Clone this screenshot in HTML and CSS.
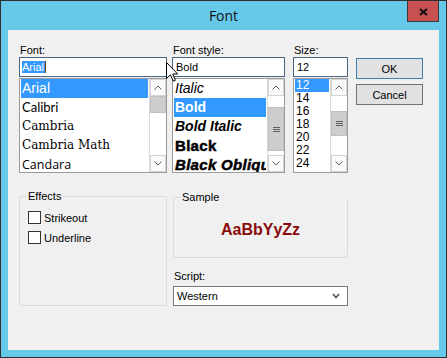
FILE: index.html
```html
<!DOCTYPE html>
<html>
<head>
<meta charset="utf-8">
<title>Font</title>
<link rel="stylesheet" href="styles.css">
</head>
<body>
<div class="window">
  <div class="titlebar">
    <span class="title">Font</span>
    <div class="close"><svg width="9" height="8" viewBox="0 0 9 8"><path d="M1 1 L8 7 M8 1 L1 7" stroke="#111" stroke-width="2.2" fill="none"/></svg></div>
  </div>
  <div class="client">
    <div class="top-row">
      <div class="col col-font">
        <div class="label">Font:</div>
        <div class="input"><span class="sel">Arial</span><span class="caret"></span></div>
        <div class="list">
          <ul class="items">
            <li class="item selected f-arial">Arial</li>
            <li class="item f-calibri">Calibri</li>
            <li class="item f-cambria">Cambria</li>
            <li class="item f-cambria">Cambria Math</li>
            <li class="item f-candara">Candara</li>
          </ul>
          <div class="sb">
            <div class="sb-btn"><svg width="8" height="5" viewBox="0 0 8 5"><path d="M0.5 4.5 L4 1 L7.5 4.5" stroke="#606060" fill="none"/></svg></div>
            <div class="sb-track"><div class="sb-thumb" style="margin-top:0;height:17px"></div></div>
            <div class="sb-btn"><svg width="8" height="5" viewBox="0 0 8 5"><path d="M0.5 0.5 L4 4 L7.5 0.5" stroke="#606060" fill="none"/></svg></div>
          </div>
        </div>
      </div>
      <div class="col col-style">
        <div class="label">Font style:</div>
        <div class="input"><span class="val">Bold</span></div>
        <div class="list">
          <ul class="items">
            <li class="item s-italic">Italic</li>
            <li class="item selected s-bold">Bold</li>
            <li class="item s-bolditalic">Bold Italic</li>
            <li class="item s-black">Black</li>
            <li class="item s-blackoblique">Black Oblique</li>
          </ul>
          <div class="sb">
            <div class="sb-btn"><svg width="8" height="5" viewBox="0 0 8 5"><path d="M0.5 4.5 L4 1 L7.5 4.5" stroke="#606060" fill="none"/></svg></div>
            <div class="sb-track"><div class="sb-thumb" style="margin-top:11px;height:44px"><span class="grip"></span></div></div>
            <div class="sb-btn"><svg width="8" height="5" viewBox="0 0 8 5"><path d="M0.5 0.5 L4 4 L7.5 0.5" stroke="#606060" fill="none"/></svg></div>
          </div>
        </div>
      </div>
      <div class="col col-size">
        <div class="label">Size:</div>
        <div class="input"><span class="val">12</span></div>
        <div class="list">
          <ul class="items size-items">
            <li class="item selected">12</li>
            <li class="item">14</li>
            <li class="item">16</li>
            <li class="item">18</li>
            <li class="item">20</li>
            <li class="item">22</li>
            <li class="item">24</li>
          </ul>
          <div class="sb">
            <div class="sb-btn"><svg width="8" height="5" viewBox="0 0 8 5"><path d="M0.5 4.5 L4 1 L7.5 4.5" stroke="#606060" fill="none"/></svg></div>
            <div class="sb-track"><div class="sb-thumb" style="margin-top:15px;height:25px"><span class="grip"></span></div></div>
            <div class="sb-btn"><svg width="8" height="5" viewBox="0 0 8 5"><path d="M0.5 0.5 L4 4 L7.5 0.5" stroke="#606060" fill="none"/></svg></div>
          </div>
        </div>
      </div>
      <div class="col col-buttons">
        <div class="btn btn-default">OK</div>
        <div class="btn">Cancel</div>
      </div>
    </div>
    <div class="bottom-row">
      <div class="group group-effects">
        <div class="group-title">Effects</div>
        <div class="checks">
          <div class="check"><span class="box"></span><span>Strikeout</span></div>
          <div class="check"><span class="box"></span><span>Underline</span></div>
        </div>
      </div>
      <div class="right-col">
        <div class="group group-sample">
          <div class="group-title">Sample</div>
          <div class="sample-area"><span class="sample-text">AaBbYyZz</span></div>
        </div>
        <div class="label script-label">Script:</div>
        <div class="combo"><span>Western</span><svg width="8" height="6" viewBox="0 0 8 6"><path d="M1 1 L4 4.5 L7 1" stroke="#555" stroke-width="1.6" fill="none"/></svg></div>
      </div>
    </div>
    <svg class="cursor" width="13" height="21" viewBox="0 0 13 21"><path d="M0.5 0.5 L0.5 16.5 L4.5 12.8 L7.2 19.2 L9.4 18.3 L6.8 12 L11.7 12 Z" fill="#fff" stroke="#000" stroke-width="1" stroke-linejoin="miter"/></svg>
  </div>
</div>
</body>
</html>
```
FILE: styles.css
```css
* { box-sizing: border-box; }
body {
  margin: 0;
  font-family: "Liberation Sans", Arial, sans-serif;
  font-size: 11px;
  color: #000;
}
.window {
  width: 447px;
  height: 358px;
  border: 1px solid #2e2e2e;
  background: #66c9ea;
  display: flex;
  flex-direction: column;
}
.titlebar {
  height: 29px;
  flex: none;
  position: relative;
  display: flex;
  align-items: center;
  justify-content: center;
}
.title {
  font-family: "Open Sans", "Liberation Sans", sans-serif;
  font-size: 14px;
  color: #111;
}
.close {
  position: absolute;
  top: 0;
  right: 7px;
  width: 32px;
  height: 21px;
  background: #c75050;
  border: 1px solid #3a3a3a;
  border-top: none;
  display: flex;
  align-items: center;
  justify-content: center;
  padding-top: 1px;
}
.client {
  flex: 1;
  margin: 0 7px 7px;
  background: #f0f0f0;
  position: relative;
  padding: 14px 0 0 11px;
}
.top-row { display: flex; }
.col-font { width: 148px; }
.col-style { width: 113px; margin-left: 5px; }
.col-size { width: 55px; margin-left: 8px; }
.col-buttons {
  width: 67px;
  margin-left: 8px;
  padding-top: 14px;
  display: flex;
  flex-direction: column;
  gap: 5px;
}
.label {
  height: 13px;
  line-height: 13px;
  padding-left: 1px;
}
.input {
  height: 20px;
  border: 1px solid #4a6482;
  background: #fff;
  padding-left: 2px;
  display: flex;
  align-items: center;
  line-height: 12px;
}
.input .val { padding-left: 1px; }
.sel {
  background: #3399ff;
  color: #fff;
  height: 12px;
  padding: 0 1px 0 0;
}
.caret {
  width: 1px;
  height: 12px;
  background: #7a3c00;
}
.list {
  margin-top: 1px;
  height: 95px;
  border: 1px solid #9a9a9a;
  background: #fff;
  display: flex;
  overflow: hidden;
}
.items {
  flex: 1;
  list-style: none;
  margin: 0;
  padding: 0 1px 0 1px;
  overflow: hidden;
  min-width: 0;
}
.item {
  height: 19px;
  line-height: 19px;
  padding-left: 1px;
  white-space: nowrap;
  overflow: hidden;
}
.item.selected { background: #3399ff; color: #fff; }
.f-arial { font-size: 14px; }
.f-calibri { font-family: Lato, "Liberation Sans", sans-serif; font-size: 13px; }
.f-cambria { font-family: "DejaVu Serif", "Liberation Serif", serif; font-size: 12px; }
.f-candara { font-family: "Open Sans", "Liberation Sans", sans-serif; font-size: 12.5px; }
.s-italic { font-size: 14px; font-style: italic; }
.s-bold { font-size: 14px; font-weight: bold; }
.s-bolditalic { font-size: 14px; font-weight: bold; font-style: italic; }
.s-black { font-size: 15px; font-weight: 900; -webkit-text-stroke: 0.5px #000; letter-spacing: 0.3px; }
.s-blackoblique { font-size: 15px; font-weight: 900; font-style: italic; -webkit-text-stroke: 0.5px #000; letter-spacing: 0.3px; }
.size-items .item {
  height: 13px;
  line-height: 13px;
  font-size: 12px;
}
.sb {
  width: 17px;
  flex: none;
  display: flex;
  flex-direction: column;
  border-left: 1px solid #d9d9d9;
  background: #fff;
}
.sb-btn {
  height: 17px;
  border: 1px solid #d4d4d4;
  background: #fafafa;
  display: flex;
  align-items: center;
  justify-content: center;
  flex: none;
}
.sb-track {
  flex: 1;
  display: flex;
  flex-direction: column;
}
.sb-thumb {
  background: #cdcdcd;
  border: 1px solid #c0c0c0;
  display: flex;
  align-items: center;
  justify-content: center;
  flex: none;
}
.grip {
  width: 7px;
  height: 5px;
  border-top: 1px solid #606060;
  border-bottom: 1px solid #606060;
  position: relative;
}
.grip::after {
  content: "";
  position: absolute;
  left: 0;
  right: 0;
  top: 1px;
  height: 1px;
  background: #606060;
}
.btn {
  height: 21px;
  border: 1px solid #707070;
  background: #e1e1e1;
  display: flex;
  align-items: center;
  justify-content: center;
}
.btn-default { border-color: #3c7fb1; }
.bottom-row {
  display: flex;
  margin-top: 23px;
}
.group {
  border: 1px solid #d5dce2;
  border-radius: 3px;
}
.group-title {
  display: table;
  margin: -7px 0 0 7px;
  padding: 0 1px;
  line-height: 13px;
  background: #f0f0f0;
}
.group-effects {
  width: 148px;
  height: 110px;
}
.checks {
  padding: 8px 0 0 8px;
  display: flex;
  flex-direction: column;
  gap: 7px;
}
.check {
  display: flex;
  align-items: center;
  gap: 3px;
  height: 13px;
}
.box {
  width: 13px;
  height: 13px;
  border: 1px solid #333;
  background: #fff;
}
.right-col {
  width: 175px;
  margin-left: 6px;
  margin-top: 1px;
}
.group-sample {
  height: 61px;
  display: flex;
  flex-direction: column;
}
.sample-area {
  flex: 1;
  display: flex;
  align-items: center;
  justify-content: center;
  padding-bottom: 1px;
}
.sample-text {
  font-size: 16px;
  font-weight: bold;
  color: #8b0b0b;
}
.script-label { margin-top: 12px; }
.combo {
  margin-top: 3px;
  height: 20px;
  border: 1px solid #7a7a7a;
  background: #fff;
  display: flex;
  align-items: center;
  justify-content: space-between;
  padding: 0 7px 0 3px;
}
.cursor {
  position: absolute;
  left: 158px;
  top: 32px;
}
```
